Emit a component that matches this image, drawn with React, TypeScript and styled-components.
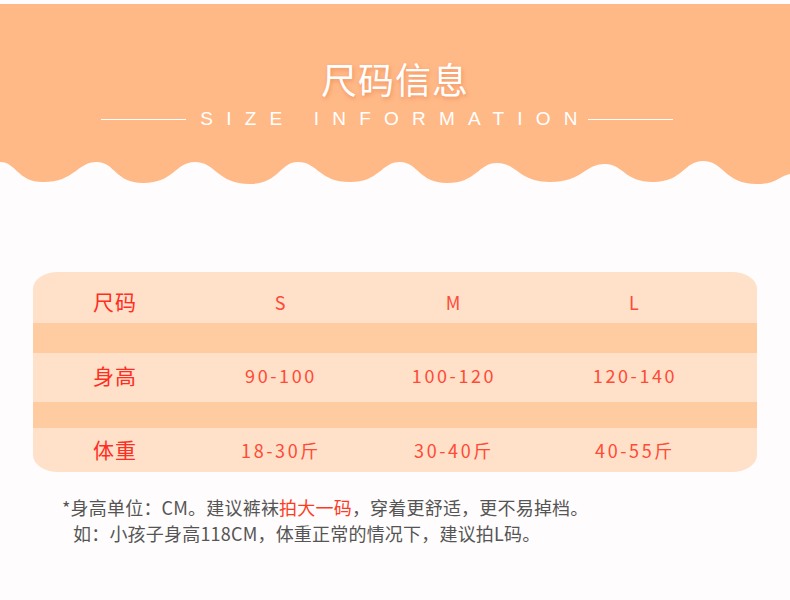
import React from "react";
import styled, { createGlobalStyle } from "styled-components";

const GlobalStyle = createGlobalStyle`
  html, body { margin: 0; padding: 0; background: #fefcfc; }
  body { font-family: "Noto Sans CJK SC", "Noto Sans", sans-serif; }
`;

const ORANGE = "#ffb987";

const Page = styled.div`
  width: 790px;
  height: 600px;
  padding-top: 4px;
  box-sizing: border-box;
  background: #fefcfc;
  overflow: hidden;
`;

const Header = styled.header`
  display: flex;
  flex-direction: column;
`;

const HeaderBody = styled.div`
  background: ${ORANGE};
  height: 156px;
  display: flex;
  flex-direction: column;
  align-items: center;
  padding-top: 52px;
  box-sizing: border-box;
`;

const Title = styled.h1`
  margin: 0;
  font-size: 36px;
  line-height: 44px;
  font-weight: 400;
  color: #ffffff;
  letter-spacing: 1px;
  text-shadow: 1px 2px 4px rgba(228, 112, 60, 0.55);
`;

const SubRow = styled.div`
  display: flex;
  align-items: center;
  margin-top: 9px;
  padding-right: 16px;
`;

const Rule = styled.span<{ $side: "left" | "right" }>`
  display: block;
  width: 85px;
  height: 1px;
  background: #ffffff;
  margin-left: ${(p) => (p.$side === "right" ? "-3px" : "0")};
  margin-right: ${(p) => (p.$side === "left" ? "14px" : "0")};
`;

const SubTitle = styled.div`
  font-family: "Liberation Sans", Arial, sans-serif;
  font-size: 19px;
  line-height: 20px;
  letter-spacing: 13.2px;
  color: #ffffff;
  white-space: pre;
`;

const Wave = styled.svg`
  display: block;
  width: 790px;
  height: 26px;
  margin-top: -1px;
`;

const Table = styled.div`
  margin: 87px 0 0 33px;
  width: 724px;
  border-radius: 25px / 17px;
  overflow: hidden;
  background: #ffe0c9;
`;

const Row = styled.div<{ $h: number; $pt?: number; $pb?: number }>`
  display: grid;
  grid-template-columns: 162px 170px 176px 186px 1fr;
  align-items: center;
  height: ${(p) => p.$h}px;
  padding-top: ${(p) => p.$pt ?? 0}px;
  padding-bottom: ${(p) => p.$pb ?? 0}px;
  box-sizing: border-box;
`;

const Stripe = styled.div<{ $h: number }>`
  height: ${(p) => p.$h}px;
  background: #ffcba1;
`;

const Label = styled.div`
  padding-left: 60px;
  font-size: 21px;
  color: #ff2d22;
  letter-spacing: 1px;
  line-height: 1;
`;

const SizeCell = styled.div`
  text-align: center;
  font-size: 18px;
  color: #ff4a36;
  line-height: 1;
`;

const ValueCell = styled.div`
  text-align: center;
  font-size: 18px;
  letter-spacing: 2.6px;
  color: #ff4a36;
  line-height: 1;
  padding-left: 2px;
`;

const Notes = styled.div`
  margin: 22px 0 0 62px;
  font-size: 18px;
  line-height: 26px;
  color: #555555;
  letter-spacing: 0.2px;
`;

const NoteLine = styled.p<{ $indent?: boolean }>`
  margin: 0;
  padding-left: ${(p) => (p.$indent ? "11px" : "0")};
  white-space: nowrap;
`;

const Red = styled.span`
  color: #ff3b1f;
`;

const wavePoints: [number, number][] = [
  [0, 3], [43, 23], [97, 3], [143, 24], [195, 3], [250, 25], [298, 3],
  [350, 23], [400, 3], [447, 24], [497, 4], [550, 23], [605, 5], [653, 23],
  [703, 2], [757, 25], [790, 15],
];

function buildWave(): string {
  let d = `M0,0 L0,${wavePoints[0][1]}`;
  for (let i = 1; i < wavePoints.length; i++) {
    const [x0, y0] = wavePoints[i - 1];
    const [x1, y1] = wavePoints[i];
    const dx = x1 - x0;
    const k0 = y0 < y1 ? 0.38 : 0.6;
    const k1 = y1 < y0 ? 0.38 : 0.6;
    const last = i === wavePoints.length - 1;
    const c2y = last ? y1 + 3 : y1;
    d += ` C${x0 + dx * k0},${y0} ${x1 - dx * k1},${c2y} ${x1},${y1}`;
  }
  d += " L790,0 Z";
  return d;
}

const rows = [
  { label: "身高", values: ["90-100", "100-120", "120-140"] },
  { label: "体重", values: ["18-30斤", "30-40斤", "40-55斤"] },
];

export default function App() {
  return (
    <>
      <GlobalStyle />
      <Page>
        <Header>
          <HeaderBody>
            <Title>尺码信息</Title>
            <SubRow>
              <Rule $side="left" />
              <SubTitle>SIZE INFORMATION</SubTitle>
              <Rule $side="right" />
            </SubRow>
          </HeaderBody>
          <Wave viewBox="0 0 790 26" preserveAspectRatio="none">
            <path d={buildWave()} fill={ORANGE} />
          </Wave>
        </Header>

        <Table>
          <Row $h={51} $pt={8}>
            <Label>尺码</Label>
            <SizeCell>S</SizeCell>
            <SizeCell>M</SizeCell>
            <SizeCell>L</SizeCell>
          </Row>
          <Stripe $h={30} />
          <Row $h={49} $pb={5}>
            <Label>{rows[0].label}</Label>
            {rows[0].values.map((v) => (
              <ValueCell key={v}>{v}</ValueCell>
            ))}
          </Row>
          <Stripe $h={26} />
          <Row $h={44} $pb={1}>
            <Label>{rows[1].label}</Label>
            {rows[1].values.map((v) => (
              <ValueCell key={v}>{v}</ValueCell>
            ))}
          </Row>
        </Table>

        <Notes>
          <NoteLine>
            *身高单位：CM。建议裤袜<Red>拍大一码</Red>，穿着更舒适，更不易掉档。
          </NoteLine>
          <NoteLine $indent>如：小孩子身高118CM，体重正常的情况下，建议拍L码。</NoteLine>
        </Notes>
      </Page>
    </>
  );
}
